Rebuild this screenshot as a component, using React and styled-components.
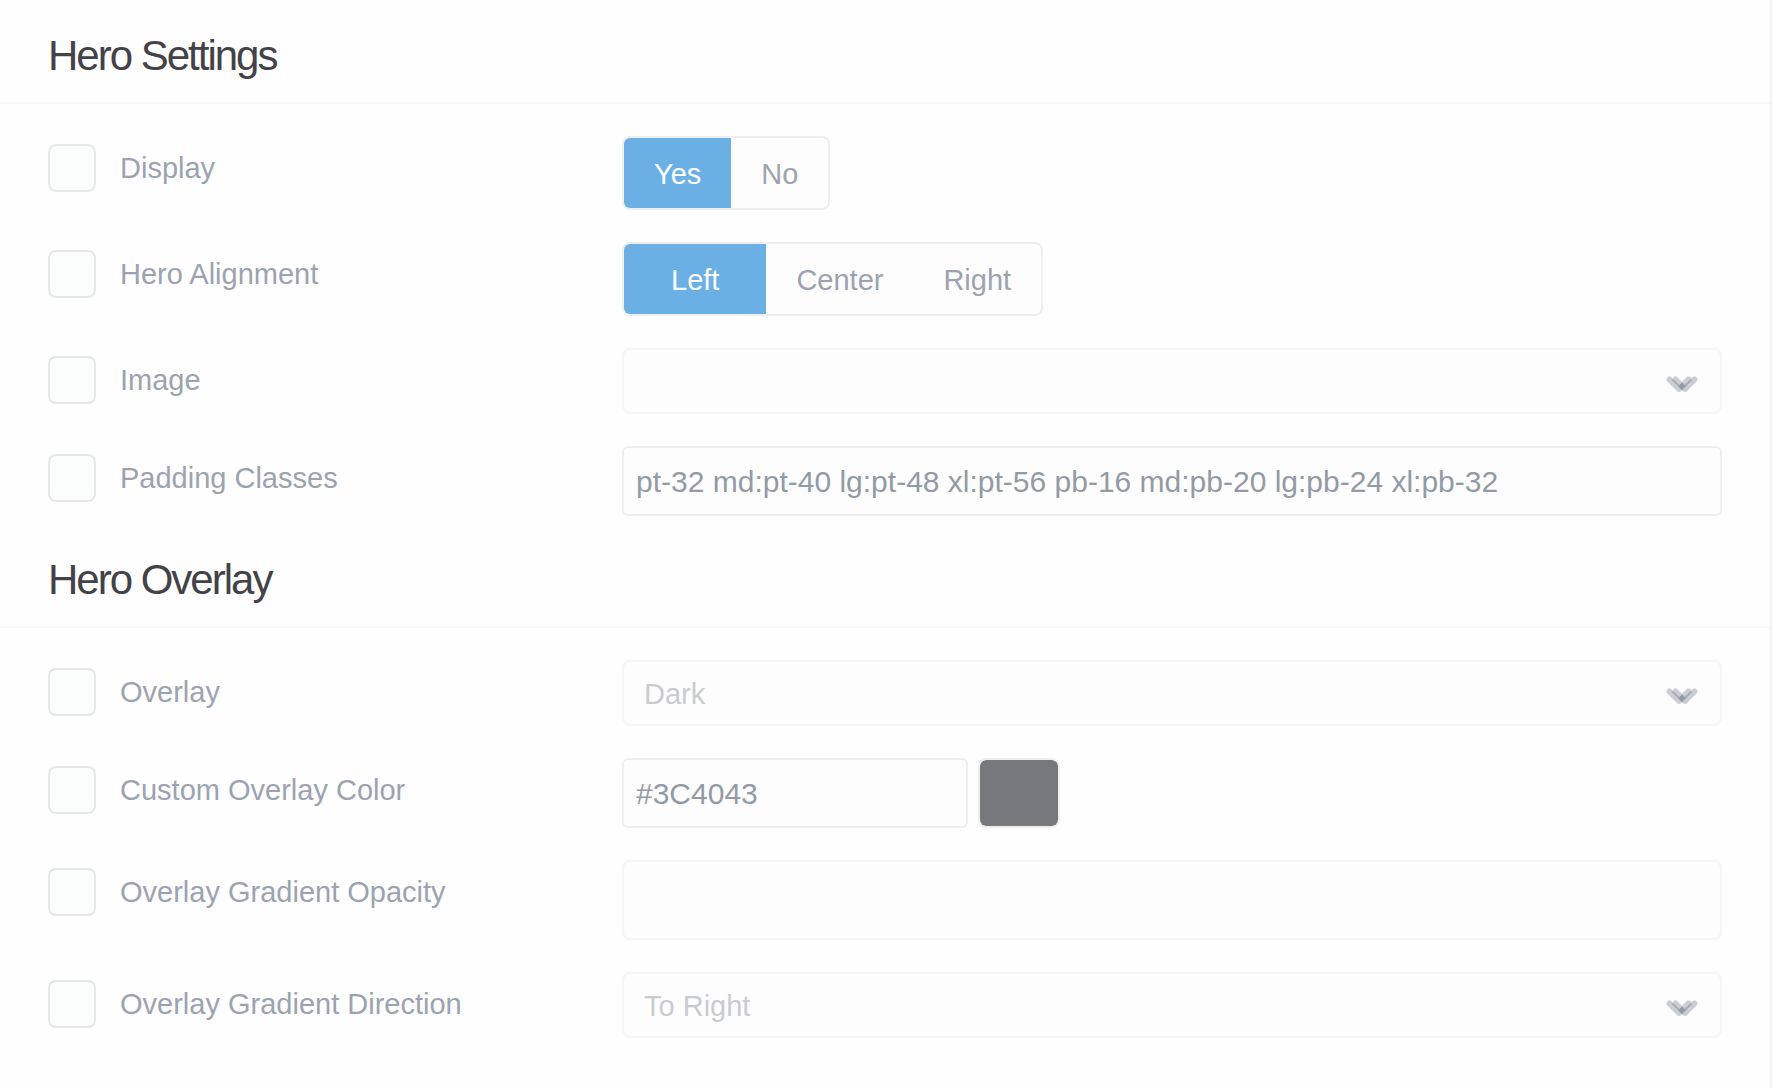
import React, { useState } from 'react';
import styled, { createGlobalStyle } from 'styled-components';

const GlobalStyle = createGlobalStyle`
  *, *::before, *::after { box-sizing: border-box; }
  body {
    margin: 0;
    background: #fefefe;
    color: #9ba3b0;
    font-family: "Liberation Sans", Arial, sans-serif;
    font-size: 29px;
    line-height: 48px;
  }
  input, select { font: inherit; }
`;

const Page = styled.main`
  min-height: 100vh;
  border-right: 2px solid #f2f2f2;
`;

const Heading = styled.h1`
  margin: 0;
  padding: 24px 48px 14px;
  border-bottom: 2px solid #f7f7f7;
  color: #434247;
  font-size: 42px;
  font-weight: 400;
  line-height: 64px;
  letter-spacing: -2px;
`;

const Fields = styled.div`
  display: flex;
  flex-direction: column;
  gap: 32px;
  padding: 32px 48px 8px;
`;

const Row = styled.div`
  display: grid;
  grid-template-columns: 574px minmax(0, 1fr);
  align-items: start;
`;

const Toggle = styled.label`
  display: flex;
  align-items: center;
  gap: 24px;
  padding-top: 8px;
`;

const Checkbox = styled.input`
  appearance: none;
  flex: none;
  width: 48px;
  height: 48px;
  margin: 0;
  border: 2px solid #e6e7e7;
  border-radius: 8px;
  background: #fbfdfc;
  &:checked { background: #6ab0e5; }
`;

const Segments = styled.div`
  display: flex;
  width: fit-content;
  overflow: hidden;
  border: 2px solid #eeeeee;
  border-radius: 8px;
  background: #fdfdfd;
`;

const SegmentRadio = styled.input`
  appearance: none;
  position: absolute;
  margin: 0;
`;

const Segment = styled.label`
  padding: 12px ${(p) => (p.$wide ? 47 : 30)}px 10px;
  background: ${(p) => (p.$active ? '#6ab0e5' : 'transparent')};
  color: ${(p) => (p.$active ? '#fefefe' : '#9ba3b0')};
`;

const TextInput = styled.input`
  width: ${(p) => (p.$short ? '346px' : '100%')};
  height: 70px;
  padding: 2px 12px 0;
  border: 2px solid #eeeeee;
  border-radius: 6px;
  background: #fdfdfd;
  color: #929ba5;
  font-size: 30px;
`;

const RangeInput = styled.input`
  display: block;
  width: 100%;
  height: 80px;
  padding: 0 20px;
  border: 2px solid #f6f6f6;
  border-radius: 8px;
  background: #fdfdfd;
  color: #c9cbd0;
`;

const SelectBox = styled.div`
  position: relative;
`;

const Select = styled.select`
  appearance: none;
  display: block;
  width: 100%;
  height: 66px;
  padding: 2px 20px 0;
  border: 2px solid #f6f6f6;
  border-radius: 8px;
  background: #fdfdfd;
  color: #c9cbd0;
`;

const Arrow = styled.svg`
  position: absolute;
  top: 28px;
  right: 24px;
  width: 32px;
  height: 18px;
  pointer-events: none;
`;

const ColorGroup = styled.div`
  display: flex;
  gap: 10px;
`;

const Swatch = styled.input`
  appearance: none;
  width: 82px;
  height: 70px;
  padding: 0;
  overflow: hidden;
  border: 2px solid #eeeeee;
  border-radius: 8px;
  background: #fdfdfd;
  &::-webkit-color-swatch-wrapper { padding: 0; }
  &::-webkit-color-swatch { border: 0; border-radius: 6px; opacity: 0.7; }
`;

function Field({ label, children }) {
  return (
    <Row>
      <Toggle>
        <Checkbox type="checkbox" />
        <span>{label}</span>
      </Toggle>
      {children}
    </Row>
  );
}

function SegmentedControl({ name, options, wideFirst }) {
  const [value, setValue] = useState(options[0]);
  return (
    <Segments role="radiogroup" aria-label={name}>
      {options.map((option, i) => (
        <Segment key={option} $active={value === option} $wide={wideFirst && i === 0}>
          <SegmentRadio
            type="radio"
            name={name}
            checked={value === option}
            onChange={() => setValue(option)}
          />
          {option}
        </Segment>
      ))}
    </Segments>
  );
}

function Dropdown({ label, value }) {
  return (
    <SelectBox>
      <Select aria-label={label} defaultValue={value}>
        <option>{value}</option>
      </Select>
      <Arrow viewBox="0 0 32 18" fill="none" aria-hidden="true">
        <g stroke="#cacdd2" strokeWidth="6" strokeLinecap="round" strokeLinejoin="round">
          <path d="M3.5 3.5 L13 13 L22.5 3.5" />
          <path d="M9.5 3.5 L19 13 L28.5 3.5" />
        </g>
        <path d="M6.5 3.5 L16 13 L25.5 3.5" stroke="#9da6b0" strokeWidth="1.6" />
        <path d="M16 6.5 L19.5 10 L16 14 L12.5 10 Z" fill="#8e99a4" />
      </Arrow>
    </SelectBox>
  );
}

export default function App() {
  const [color, setColor] = useState('#3C4043');
  return (
    <Page>
      <GlobalStyle />
      <Heading>Hero Settings</Heading>
      <Fields>
        <Field label="Display">
          <SegmentedControl name="Display" options={['Yes', 'No']} />
        </Field>
        <Field label="Hero Alignment">
          <SegmentedControl name="Hero Alignment" options={['Left', 'Center', 'Right']} wideFirst />
        </Field>
        <Field label="Image">
          <Dropdown label="Image" value="" />
        </Field>
        <Field label="Padding Classes">
          <TextInput
            aria-label="Padding Classes"
            defaultValue="pt-32 md:pt-40 lg:pt-48 xl:pt-56 pb-16 md:pb-20 lg:pb-24 xl:pb-32"
          />
        </Field>
      </Fields>
      <Heading as="h2">Hero Overlay</Heading>
      <Fields>
        <Field label="Overlay">
          <Dropdown label="Overlay" value="Dark" />
        </Field>
        <Field label="Custom Overlay Color">
          <ColorGroup>
            <TextInput
              $short
              aria-label="Custom Overlay Color"
              value={color}
              onChange={(e) => setColor(e.target.value)}
            />
            <Swatch
              type="color"
              aria-label="Pick overlay color"
              value={color.toLowerCase()}
              onChange={(e) => setColor(e.target.value.toUpperCase())}
            />
          </ColorGroup>
        </Field>
        <Field label="Overlay Gradient Opacity">
          <RangeInput aria-label="Overlay Gradient Opacity" />
        </Field>
        <Field label="Overlay Gradient Direction">
          <Dropdown label="Overlay Gradient Direction" value="To Right" />
        </Field>
      </Fields>
    </Page>
  );
}
